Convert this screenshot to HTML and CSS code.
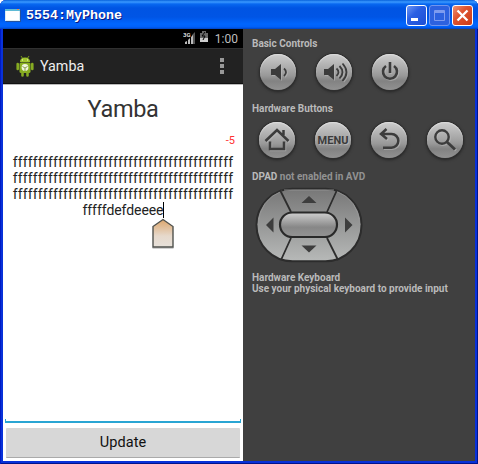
FILE: index.html
```html
<!DOCTYPE html>
<html lang="en">
<head>
<meta charset="utf-8">
<title>5554:MyPhone</title>
<link rel="stylesheet" href="styles.css">
</head>
<body>
<div class="window">
  <header class="titlebar">
    <svg class="app-icon" width="16" height="13" viewBox="0 0 16 13"><path fill="#dcecf4" d="M0 0h15v12H0z"/><path fill="#5fbad5" d="M0 0h15v2H0z"/><path fill="#fff" d="M1 2h13v9H1z"/><path fill="#e98b53" d="M12 0h2v1h-2z"/><path fill="#24539f" d="M15 1h1v12H1v-1h14z"/></svg>
    <span class="caption">5554:MyPhone</span>
    <div class="win-buttons">
      <div class="win-btn"><svg width="19" height="19"><path fill="#fff" d="M4 12h7v3H4z"/></svg></div>
      <div class="win-btn disabled"><svg width="19" height="19"><path fill="none" stroke="#7e9bef" d="M4.500 4.500h10v10h-10z M4 5.500h11 M4 6.500h11"/></svg></div>
      <div class="win-btn close"><svg width="19" height="19"><path fill="none" stroke="#fff" stroke-width="2.300" d="M4.500 4.500l10 10M14.500 4.500l-10 10"/></svg></div>
    </div>
  </header>
  <main class="content">
    <section class="phone">
      <div class="status">
        <svg width="28" height="16" viewBox="0 0 28 16"><text x="0" y="7" class="net">3G</text><path fill="#555" d="M9 5l3-3v12H9z"/><path fill="#bbb" d="M2 14v-2l2-1v3zM5 14v-4l2-2v6zM8 14V7l2-2v9z"/><path fill="#686868" d="M17 3h2V1h4v2h2v6h-8z"/><path fill="#ccc" d="M17 8h8v4h-8z"/><path fill="none" stroke="#050505" d="M22 2l-3 4h3l-2 4"/></svg>
        <span class="clock">1:00</span>
      </div>
      <div class="actionbar">
        <svg width="18" height="21" viewBox="0 0 18 21"><path fill="none" stroke="#789c1c" d="M5 0l2 3M13 0l-2 3"/><path fill="#a0c52d" d="M4 6q0-4.500 5-4.500T14 6z"/><rect x="3.500" y="6.500" width="11" height="10.500" rx="1.500" fill="#8ab022"/><path stroke="#86ab22" stroke-width="2.600" stroke-linecap="round" d="M1.700 8v5M16.300 8v5M6.500 16v3.500M11.500 16v3.500"/><circle cx="9" cy="11.500" r="3.400" fill="#f1f6df"/><path fill="none" stroke="#8b9e4b" d="M6.500 10.500L9 12l2.500-1.500M9 12v3"/><path fill="#eff6d0" d="M6 3.500h1v1H6zM11 3.500h1v1h-1z"/></svg>
        <span class="app-name">Yamba</span>
        <div class="overflow"><i></i><i></i><i></i></div>
      </div>
      <div class="screen">
        <h1>Yamba</h1>
        <div class="counter">-5</div>
        <div class="editor">
          <div class="line">ffffffffffffffffffffffffffffffffffffffffffff</div>
          <div class="line">ffffffffffffffffffffffffffffffffffffffffffff</div>
          <div class="line">ffffffffffffffffffffffffffffffffffffffffffff</div>
          <div class="line last">fffffdefdeeee<span class="caret"><svg class="handle" width="26" height="34" viewBox="0 0 26 34"><defs><linearGradient id="hg" x1="0" y1="0" x2="0" y2="1"><stop offset="0" stop-color="#dda66c"/><stop offset=".6" stop-color="#e6d9cc"/><stop offset="1" stop-color="#e7e1da"/></linearGradient></defs><path fill="#000" opacity=".18" d="M2.500 29h21v2h-21z"/><path fill="url(#hg)" stroke="#50524e" stroke-width="1.400" d="M3 8.500L13 1.500l10 7V29H3z"/></svg></span></div>
        </div>
        <button class="update">Update</button>
      </div>
    </section>
    <aside class="controls">
      <h2>Basic Controls</h2>
      <div class="row basic">
        <div class="key"><svg viewBox="0 0 36 36"><path fill="#3c3c3c" d="M11 15h4l6-5v16l-6-5h-4z"/><path fill="none" stroke="#3c3c3c" stroke-width="1.800" d="M24 14.500q4 3.700 0 7.500"/></svg></div>
        <div class="key"><svg viewBox="0 0 36 36"><path fill="#3c3c3c" d="M8 15h4l6-5v16l-6-5H8z"/><path fill="none" stroke="#3c3c3c" stroke-width="1.800" d="M20.500 14.500q4 3.700 0 7.500M23.500 12q6 6.200 0 12.500M26.500 9.500q8 8.700 0 17.500"/></svg></div>
        <div class="key"><svg viewBox="0 0 36 36"><path fill="none" stroke="#3c3c3c" stroke-width="2.600" d="M14 12a7 7 0 1 0 8 0M18 8v11"/></svg></div>
      </div>
      <h2 class="hw">Hardware Buttons</h2>
      <div class="row hardware">
        <div class="key"><svg viewBox="0 0 36 36"><path fill="none" stroke="#3c3c3c" stroke-width="2.500" d="M6.500 19L18 8l11.500 11M11 19.500V27h14v-7.500M24.500 13V8"/></svg></div>
        <div class="key menu">MENU</div>
        <div class="key"><svg viewBox="0 0 36 36"><path fill="none" stroke="#3c3c3c" stroke-width="2.500" d="M15.500 7L10 12l6 5M10 12h10.500a6.800 6.800 0 0 1 0 13.700H12"/></svg></div>
        <div class="key"><svg viewBox="0 0 36 36"><circle cx="15" cy="15" r="6.700" fill="none" stroke="#3c3c3c" stroke-width="2.400"/><path stroke="#3c3c3c" stroke-width="3" d="M20 20l8 7.500"/></svg></div>
      </div>
      <h2 class="dpad-title">DPAD <span>not enabled in AVD</span></h2>
      <svg class="dpad" width="108" height="76" viewBox="0 0 108 76"><defs><linearGradient id="pad" x1="0" y1="0" x2="0" y2="1"><stop offset="0" stop-color="#777"/><stop offset="1" stop-color="#b7b9b8"/></linearGradient><linearGradient id="mid" x1="0" y1="0" x2="0" y2="1"><stop offset="0" stop-color="#d0d0d0"/><stop offset=".6" stop-color="#878787"/><stop offset="1" stop-color="#949494"/></linearGradient></defs>
        <rect x="1.500" y="1.800" width="105" height="72.500" rx="36" fill="url(#pad)" stroke="#2c2c2c" stroke-width="2"/><path fill="none" stroke="#999" stroke-width=".8" d="M29 3h50M3 38Q5 12 27 4M105 38Q103 12 81 4"/><path fill="none" stroke="#2d2d2d" stroke-width="1.800" d="M25 3l11 22M82 3L72 25M36 51L26 73M72 51l11 22"/><rect x="25" y="25.500" width="57" height="24.500" rx="12.200" fill="url(#mid)" stroke="#292929" stroke-width="2.200"/><path fill="#3d3d3d" d="M46.500 16L54 9l7.500 7zM46.500 58.500L54 65.500l7.500-7zM18.500 30.500L11 38l7.500 7.500zM90 30.500l7.500 7.500-7.500 7.500z"/></svg>
      <div class="keyboard">Hardware Keyboard<br>Use your physical keyboard to provide input</div>
    </aside>
  </main>
</div>
</body>
</html>
```
FILE: styles.css
```css
* { box-sizing: border-box; }
body { margin: 0; background: #fff; font-family: Roboto, sans-serif; overflow: hidden; }
.window { width: 478px; height: 464px; background: #0831d9; border-radius: 6px 6px 0 0; overflow: hidden; box-shadow: inset 1px 0 #001bc4, inset -1px -1px #00138c; padding: 0 3px 3px; }
.titlebar { height: 29px; margin: 0 -3px; padding: 0 5px; display: flex; align-items: center; background: linear-gradient(#0862dc 0, #3b99ff 2px, #0868f0 4px, #0054e3 8px, #0055e5 17px, #0066ff 24px, #0060f8 27px, #0042c0 29px); }
.app-icon { margin-top: 1px; }
.caption { margin-left: 5px; padding-top: 3px; color: #fff; font: bold 13.33px/16px "Liberation Mono", monospace; text-shadow: 1px 1px #0a1883; flex: 1; }
.win-buttons { display: flex; gap: 2px; padding-top: 2px; }
.win-btn { width: 21px; height: 21px; border: 1px solid #fff; border-radius: 3px; background: linear-gradient(135deg, #6d96f4, #2a5fe3 40%, #1d4ed5); }
.win-btn svg { display: block; }
.win-btn.disabled { border-color: #7295ed; background: #2d61df; }
.win-btn.close { background: linear-gradient(135deg, #ee9274, #df5430 40%, #c93a16); }
.content { display: flex; height: 432px; }
.phone { width: 240px; display: flex; flex-direction: column; background: #fff; }
.status { height: 19px; background: #000; display: flex; justify-content: flex-end; padding: 1px 5px 0 0; gap: 4px; }
.net { font: bold 6px Roboto, sans-serif; fill: #ddd; }
.clock { color: #bebebe; font-size: 12px; line-height: 18px; }
.actionbar { height: 36px; background: #222; border-top: 1px solid #303030; border-bottom: 1px solid #111; display: flex; align-items: center; padding: 0 19px 0 13px; }
.app-name { flex: 1; color: #eee; font-size: 14.3px; line-height: 20px; margin-left: 6px; }
.overflow { display: grid; gap: 2px; }
.overflow i { width: 4px; height: 4px; background: #999; }
.screen { flex: 1; display: flex; flex-direction: column; padding: 8px 3px 3px; border-top: 1px solid #bbb; }
h1 { margin: 0; color: #333; font-size: 23.5px; line-height: 32px; font-weight: 400; text-align: center; letter-spacing: -.3px; }
.counter { height: 20px; margin-top: 7px; padding-right: 5px; text-align: right; color: #f33; font-size: 11px; line-height: 18px; }
.editor { flex: 1; border: solid #29a5d3; border-width: 0 1px 2px; border-image: linear-gradient(transparent calc(100% - 4px), #29a5d3 calc(100% - 4px)) 1 1 2; margin: 0 -1px; padding-top: 2px; color: #222; font: 14px/16px Roboto, sans-serif; font-variant-ligatures: none; font-kerning: none; text-align: center; white-space: nowrap; }
.line { letter-spacing: .14px; height: 16px; }
.last { letter-spacing: -.1px; }
.caret { display: inline-block; position: relative; width: 1px; height: 16px; margin-right: -1px; background: #000; vertical-align: top; }
.handle { position: absolute; left: -13px; top: 16px; }
.update { height: 30px; margin-top: 5px; border: 0; border-bottom: 1px solid #aaa; border-radius: 1px; background: #d7d7d7; color: #111; font: 14.5px/28px Roboto, sans-serif; letter-spacing: .1px; padding: 0; }
.controls { width: 232px; background: #404040; padding: 8px 9px 0; color: #bababa; }
h2 { margin: 0; font-size: 10px; line-height: 13px; font-weight: 700; }
.row { display: flex; gap: 20px; }
.basic { margin: 4px 0 0 8px; }
.hardware { margin: 7px 0 0 7px; }
.key { flex: none; width: 36px; height: 36px; border-radius: 50%; background: linear-gradient(#cdcdcd, #999 60%, #828282 75%, #929292); box-shadow: 0 0 0 1px #303030, 0 1px 3px 1px #252525, inset 0 1px 1px #ddd; }
.key svg { display: block; width: 36px; height: 36px; filter: drop-shadow(1px 1px 0 #bdbdbd88); }
.menu { color: #3b3b3b; font-size: 11px; font-weight: 700; line-height: 38px; text-align: center; text-shadow: 1px 1px #b0b0b0; }
.hw { margin-top: 12px; }
.dpad-title { margin-top: 12px; }
.dpad-title span { color: #929292; }
.dpad { display: block; margin: 4px 0 0 3px; }
.keyboard { margin-top: 9px; font-size: 10px; line-height: 11px; font-weight: 700; white-space: nowrap; }
```
